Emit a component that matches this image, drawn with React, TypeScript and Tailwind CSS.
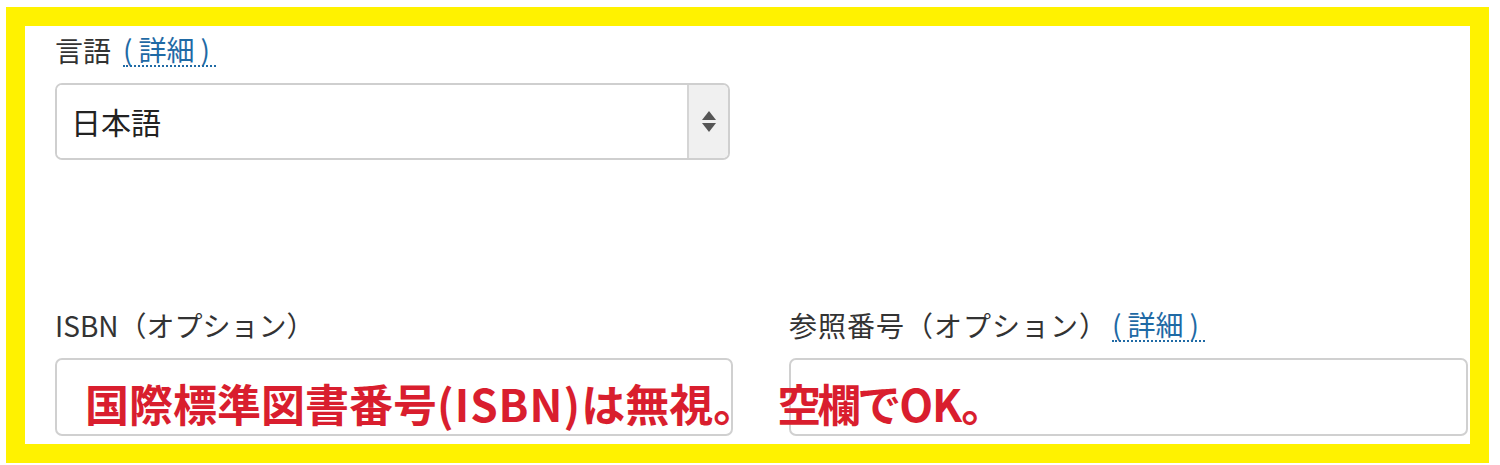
import React from "react";

const font = { fontFamily: '"Noto Sans CJK JP", "Noto Sans", sans-serif' };

function Link({ className }: { className: string }) {
  return (
    <span className={`text-[#1f6aa5] border-b-2 border-dotted border-[#1f6aa5] leading-[32px] inline-block pr-[6px] ${className}`}>
      <span className="mr-[6px]">(</span>詳細<span className="ml-[6px]">)</span>
    </span>
  );
}

export default function App() {
  return (
    <div className="w-[1500px] h-[465px] bg-white pt-[7px] pl-[6px]" style={font}>
      <div className="relative w-[1483px] h-[456px] border-[19px] border-[#fff200] bg-white pl-[30px] pr-[2px] pt-[6px]">
        <div className="grid grid-cols-[678px_679px] gap-x-[56px]">
          <div>
            <div className="h-[36px] text-[28px] leading-[36px] text-[#333] flex items-center">
              <span>言語</span>
              <Link className="ml-[12px]" />
            </div>
            <div className="mt-[15px] w-[675px] h-[77px] rounded-[7px] border-2 border-[#cfcfcf] flex overflow-hidden">
              <div className="flex-1 flex items-center pl-[14px] text-[30px] text-[#222] bg-white">日本語</div>
              <div className="w-[41px] bg-[#f0f0f0] border-l-2 border-[#d5d5d5] flex flex-col items-center justify-center gap-[3px]">
                <svg width="14" height="9" viewBox="0 0 14 9"><path d="M7 0 L14 9 L0 9 Z" fill="#555" /></svg>
                <svg width="14" height="9" viewBox="0 0 14 9"><path d="M0 0 L14 0 L7 9 Z" fill="#555" /></svg>
              </div>
            </div>
          </div>
          <div />
        </div>
        <div className="mt-[147px] grid grid-cols-[678px_679px] gap-x-[56px]">
          <div>
            <div className="h-[36px] text-[28px] leading-[36px] text-[#333]">ISBN（オプション）</div>
            <div className="mt-[15px] h-[78px] rounded-[7px] border-2 border-[#d0d0d0] bg-white" />
          </div>
          <div>
            <div className="h-[36px] text-[28px] leading-[36px] text-[#333] flex items-center">
              <span className="tracking-[1px]">参照番号（オプション）</span>
              <Link className="ml-[4px]" />
            </div>
            <div className="mt-[15px] h-[78px] rounded-[7px] border-2 border-[#d0d0d0] bg-white" />
          </div>
        </div>
        <div className="absolute left-[60px] top-[353px] text-[44px] font-bold leading-[48px] text-[#d91e2e] whitespace-nowrap flex">
          <span>
            国際標準図書番号<span className="tracking-[1px]">(ISBN)</span>は無視。
          </span>
          <span className="ml-[20px]">
            <span className="tracking-[-4px]">空欄で</span>
            <span className="ml-[2px] tracking-[-1px]">OK</span>。
          </span>
        </div>
      </div>
    </div>
  );
}
